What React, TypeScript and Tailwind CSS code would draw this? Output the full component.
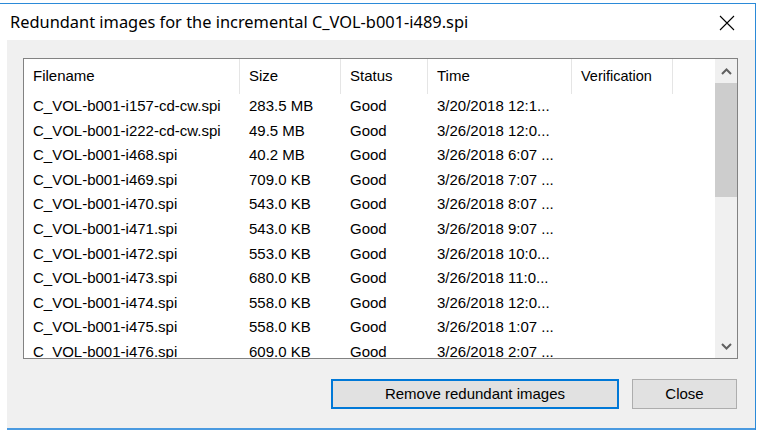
import React from "react";

const rows: [string, string, string, string][] = [
  ["C_VOL-b001-i157-cd-cw.spi", "283.5 MB", "Good", "3/20/2018 12:1..."],
  ["C_VOL-b001-i222-cd-cw.spi", "49.5 MB", "Good", "3/26/2018 12:0..."],
  ["C_VOL-b001-i468.spi", "40.2 MB", "Good", "3/26/2018 6:07 ..."],
  ["C_VOL-b001-i469.spi", "709.0 KB", "Good", "3/26/2018 7:07 ..."],
  ["C_VOL-b001-i470.spi", "543.0 KB", "Good", "3/26/2018 8:07 ..."],
  ["C_VOL-b001-i471.spi", "543.0 KB", "Good", "3/26/2018 9:07 ..."],
  ["C_VOL-b001-i472.spi", "553.0 KB", "Good", "3/26/2018 10:0..."],
  ["C_VOL-b001-i473.spi", "680.0 KB", "Good", "3/26/2018 11:0..."],
  ["C_VOL-b001-i474.spi", "558.0 KB", "Good", "3/26/2018 12:0..."],
  ["C_VOL-b001-i475.spi", "558.0 KB", "Good", "3/26/2018 1:07 ..."],
  ["C_VOL-b001-i476.spi", "609.0 KB", "Good", "3/26/2018 2:07 ..."],
];

export default function App() {
  return (
    <div
      className="w-[762px] h-[438px] bg-white overflow-hidden text-black"
      style={{ fontFamily: '"Liberation Sans", Arial, sans-serif' }}
    >
      <div className="mt-[3px] w-[756px] h-[427px] border-t border-r border-[#2b8ad8] flex flex-col">
        {/* title bar */}
        <div className="h-[36px] shrink-0 bg-white flex items-center justify-between pl-[10px] pr-[20px]">
          <span
            className="text-[16.4px] leading-none"
            style={{ fontFamily: '"Noto Sans", "Open Sans", sans-serif' }}
          >
            Redundant images for the incremental C_VOL-b001-i489.spi
          </span>
          <svg width="16" height="16" viewBox="0 0 16 16" className="mt-[1px]">
            <path d="M1 1 L15 15 M15 1 L1 15" stroke="#000" strokeWidth="1.1" />
          </svg>
        </div>
        {/* content */}
        <div className="ml-[7px] flex-1 bg-[#f0f0f0] border-b-[2px] border-[#4a9ae0] flex flex-col pl-[16px] pr-[17px] pt-[18px]">
          <div className="h-[301px] border border-[#828282] bg-white flex overflow-hidden">
            <div className="flex-1 flex flex-col overflow-hidden text-[15px]">
              <div className="h-[35px] shrink-0 flex items-center">
                <div className="w-[216px] h-full pl-[9px] flex items-center border-r border-[#e5e5e5]">Filename</div>
                <div className="w-[101px] h-full pl-[9px] flex items-center border-r border-[#e5e5e5]">Size</div>
                <div className="w-[87px] h-full pl-[9px] flex items-center border-r border-[#e5e5e5]">Status</div>
                <div className="w-[144px] h-full pl-[9px] flex items-center border-r border-[#e5e5e5]">Time</div>
                <div className="w-[101px] h-full pl-[9px] flex items-center border-r border-[#e5e5e5] text-[14.5px]">Verification</div>
              </div>
              {rows.map((r, i) => (
                <div key={i} className="h-[24.6px] shrink-0 flex items-center whitespace-nowrap">
                  <div className="w-[216px] pl-[9px]">{r[0]}</div>
                  <div className="w-[101px] pl-[9px]">{r[1]}</div>
                  <div className="w-[87px] pl-[9px]">{r[2]}</div>
                  <div className="w-[144px] pl-[9px]">{r[3]}</div>
                  <div className="w-[101px]"></div>
                </div>
              ))}
            </div>
            {/* scrollbar */}
            <div className="w-[22px] shrink-0 bg-[#f0f0f0] flex flex-col items-center">
              <div className="h-[24px] w-full flex items-center justify-center">
                <svg width="11" height="7" viewBox="0 0 11 7">
                  <path d="M1 6 L5.5 1.5 L10 6" stroke="#606060" strokeWidth="2" fill="none" />
                </svg>
              </div>
              <div className="w-full h-[114px] bg-[#cdcdcd]" />
              <div className="flex-1" />
              <div className="h-[24px] w-full flex items-center justify-center">
                <svg width="11" height="7" viewBox="0 0 11 7">
                  <path d="M1 1 L5.5 5.5 L10 1" stroke="#606060" strokeWidth="2" fill="none" />
                </svg>
              </div>
            </div>
          </div>
          <div className="mt-[20px] flex justify-end gap-[13px] pr-[1px]">
            <button className="w-[288px] h-[30px] bg-[#e1e1e1] border-[2px] border-[#0078d7] text-[15px] flex items-center justify-center">
              Remove redundant images
            </button>
            <button className="w-[105px] h-[30px] bg-[#e1e1e1] border border-[#adadad] text-[15px] flex items-center justify-center">
              Close
            </button>
          </div>
        </div>
      </div>
    </div>
  );
}
